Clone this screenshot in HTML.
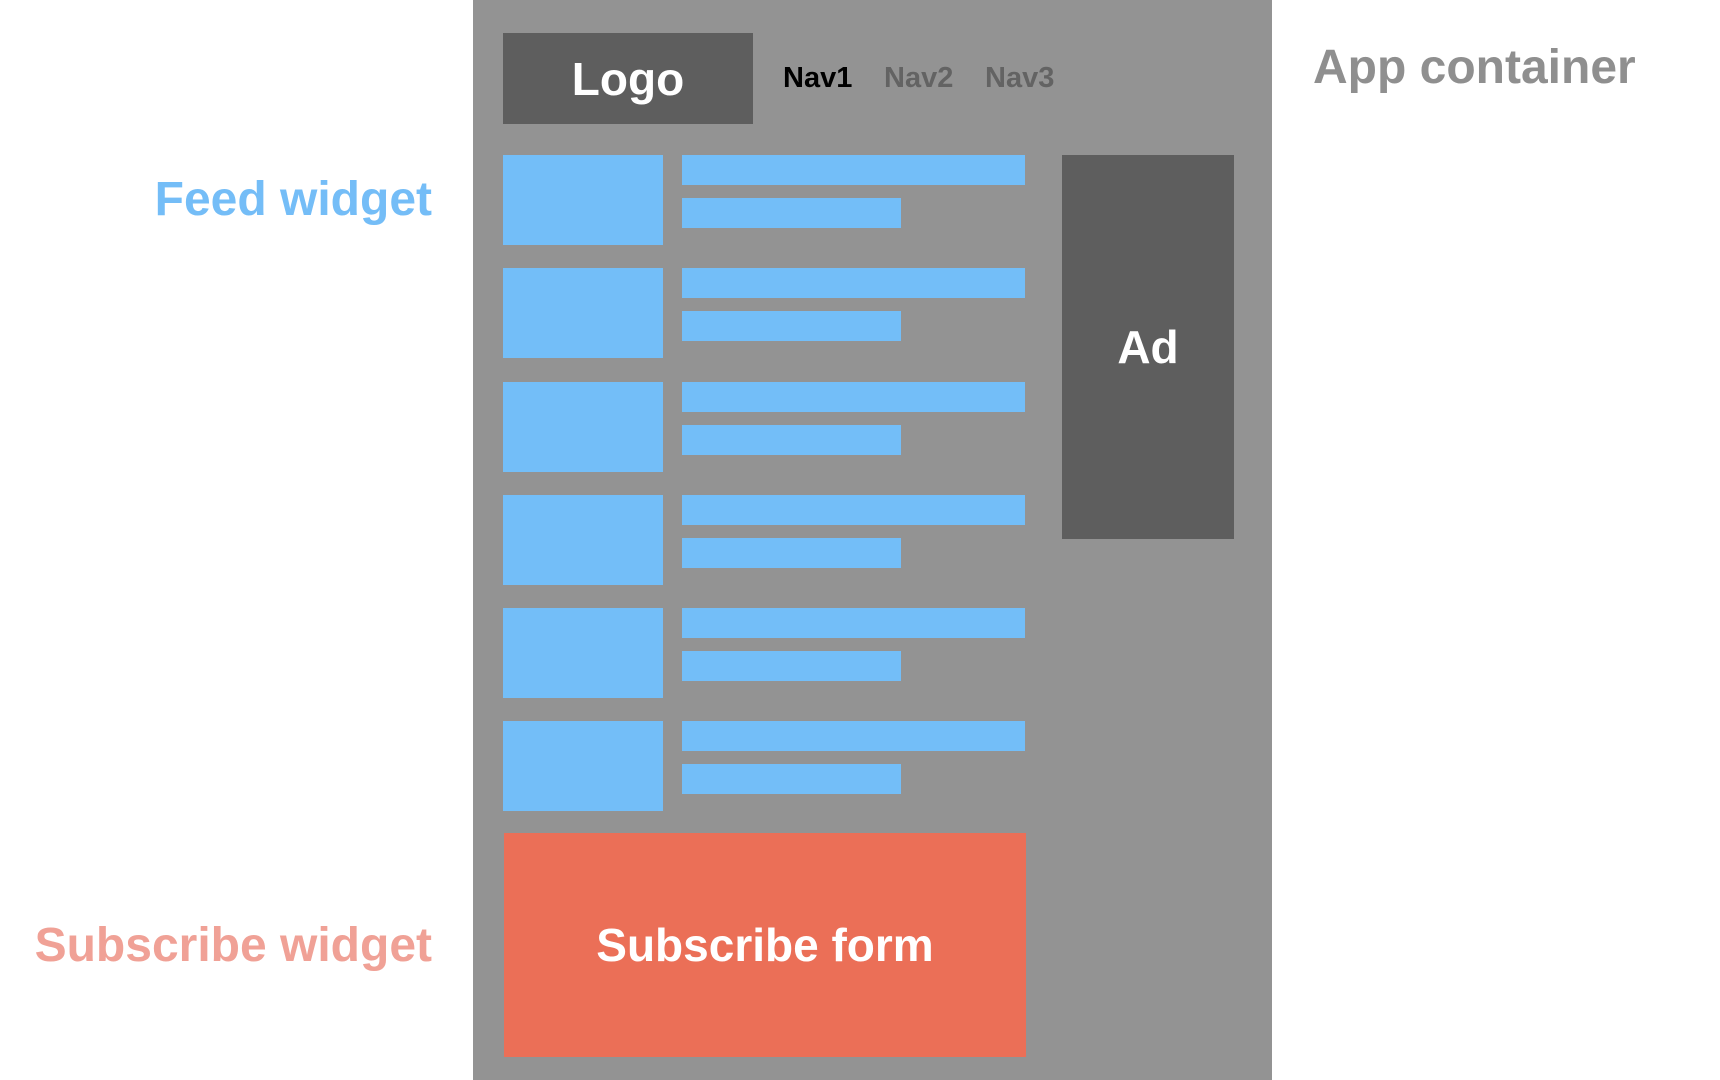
<!DOCTYPE html>
<html><head><style>
body{margin:0;width:1720px;height:1080px;background:#fff;position:relative;overflow:hidden;font-family:"Liberation Sans",Arial,sans-serif;font-weight:bold}
div{position:absolute;box-sizing:border-box}
.c{display:flex;align-items:center;justify-content:center;color:#fff}
.t{background:#73bef8}
.lbl{font-size:48px;line-height:60px;white-space:nowrap}
</style></head><body>
<div style="left:473px;top:0;width:799px;height:1080px;background:#939393"></div>
<div class="c" style="left:503px;top:33px;width:250px;height:91px;background:#5e5e5e;font-size:46px">Logo</div>
<div style="left:783px;top:62px;font-size:29px;color:#000">Nav1</div>
<div style="left:884px;top:62px;font-size:29px;color:#636363">Nav2</div>
<div style="left:985px;top:62px;font-size:29px;color:#636363">Nav3</div>

<div class="t" style="left:503px;top:155px;width:160px;height:90px"></div>
<div class="t" style="left:682px;top:155px;width:343px;height:30px"></div>
<div class="t" style="left:682px;top:198px;width:219px;height:30px"></div>

<div class="t" style="left:503px;top:268px;width:160px;height:90px"></div>
<div class="t" style="left:682px;top:268px;width:343px;height:30px"></div>
<div class="t" style="left:682px;top:311px;width:219px;height:30px"></div>

<div class="t" style="left:503px;top:382px;width:160px;height:90px"></div>
<div class="t" style="left:682px;top:382px;width:343px;height:30px"></div>
<div class="t" style="left:682px;top:425px;width:219px;height:30px"></div>

<div class="t" style="left:503px;top:495px;width:160px;height:90px"></div>
<div class="t" style="left:682px;top:495px;width:343px;height:30px"></div>
<div class="t" style="left:682px;top:538px;width:219px;height:30px"></div>

<div class="t" style="left:503px;top:608px;width:160px;height:90px"></div>
<div class="t" style="left:682px;top:608px;width:343px;height:30px"></div>
<div class="t" style="left:682px;top:651px;width:219px;height:30px"></div>

<div class="t" style="left:503px;top:721px;width:160px;height:90px"></div>
<div class="t" style="left:682px;top:721px;width:343px;height:30px"></div>
<div class="t" style="left:682px;top:764px;width:219px;height:30px"></div>

<div class="c" style="left:1062px;top:155px;width:172px;height:384px;background:#5e5e5e;font-size:46px">Ad</div>
<div class="c" style="left:504px;top:833px;width:522px;height:224px;background:#eb6f57;font-size:46px">Subscribe form</div>

<div class="lbl" style="right:1288px;top:170px;color:#74bdf7">Feed widget</div>
<div class="lbl" style="right:1288px;top:916px;color:#f0a196">Subscribe widget</div>
<div class="lbl" style="left:1313px;top:38px;color:#8f8f8f">App container</div>
</body></html>
